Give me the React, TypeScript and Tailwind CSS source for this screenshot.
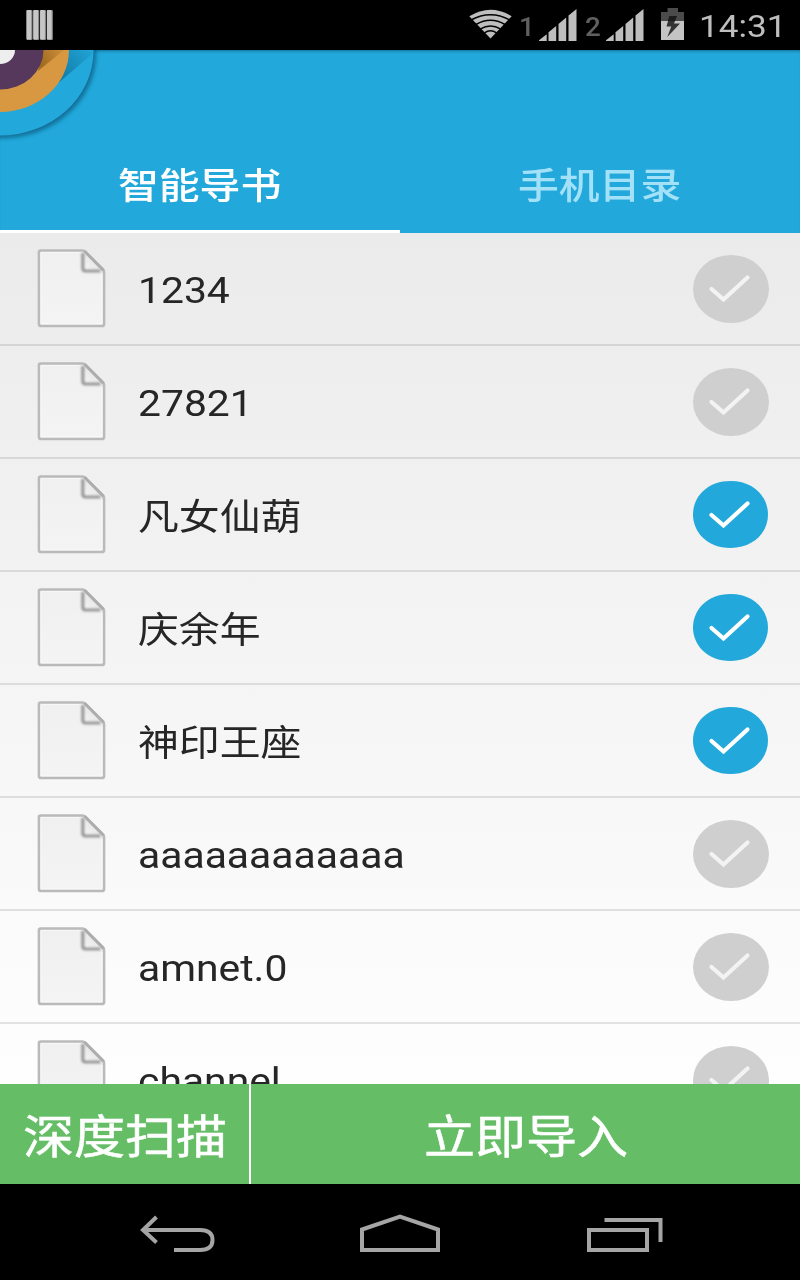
import React from "react";

type Book = { name: string; checked: boolean };

const books: Book[] = [
  { name: "1234", checked: false },
  { name: "27821", checked: false },
  { name: "凡女仙葫", checked: true },
  { name: "庆余年", checked: true },
  { name: "神印王座", checked: true },
  { name: "aaaaaaaaaaaa", checked: false },
  { name: "amnet.0", checked: false },
  { name: "channel", checked: false },
];

function SignalBars() {
  return (
    <svg width="39" height="33" viewBox="0 0 39 33" fill="#bebebe">
      <path d="M-1 32 7.700 25.300V32ZM9.500 23.300 17.200 17V32H9.500ZM19.500 15 27.200 8.500V32H19.500ZM29.500 6.500 37.500 0V32H29.500Z" />
    </svg>
  );
}

function StatusBar() {
  return (
    <header className="flex h-[50px] shrink-0 items-start bg-black text-[#bebebe]">
      <svg className="ml-[26px] mt-[9px]" width="28" height="32" viewBox="0 0 28 32">
        {[0.5, 7.3, 14.1, 20.9].map((x) => (
          <g key={x}>
            <rect x={x} y="1" width="6" height="30" rx="1" fill="#858585" />
            <rect x={x} y="1" width="4.8" height="29.4" rx="1" fill="#c6c6c6" />
          </g>
        ))}
      </svg>
      <svg className="ml-[415px] mt-[9px]" width="44" height="31" viewBox="0 0 44 31">
        <path d="M.3 7.200Q21.500-5.800 42.700 7.200L21.500 29.600Z" fill="#bebebe" />
        <g fill="none" stroke="#000" strokeWidth="1.500">
          <path d="M2 11Q21.500 .4 41 11" />
          <path d="M7 15.500Q21.500 7.100 36 15.500" />
          <path d="M11.500 19.800Q21.500 14.200 31.500 19.800" />
          <path d="M15.500 23.900Q21.500 19.500 27.500 23.900" />
        </g>
      </svg>
      <span className="ml-[6px] mt-[12px] w-[15px] origin-left scale-x-[1.11] text-[25px] leading-[32px] font-medium text-[#606060]">1</span>
      <div className="ml-[5px] mt-[9px]"><SignalBars /></div>
      <span className="ml-[7px] mt-[12px] w-[15px] origin-left scale-x-[1.11] text-[25px] leading-[32px] font-medium text-[#606060]">2</span>
      <div className="ml-[6px] mt-[9px]"><SignalBars /></div>
      <svg className="ml-[15px] mt-[8px]" width="26" height="33" viewBox="0 0 26 33">
        <path d="M1 4H7.500V0H18V4H24V14H1Z" fill="#4b4b4b" />
        <path d="M1 13H24V32H1Z" fill="#c4c4c4" />
        <path d="M9.500 8H17L14 15.500H20L7.300 29 11.300 18.500H6.500Z" fill="#333" />
        <path d="M9.500 8H17L14.800 13H7.800Z" fill="#1c1c1c" />
      </svg>
      <span className="ml-[13px] mt-[6px] origin-left scale-x-[1.1] text-[32px] leading-[40px] whitespace-nowrap">14:31</span>
    </header>
  );
}

function Logo() {
  return (
    <svg className="block h-[100px] w-[110px]" viewBox="0 0 110 100">
      <defs>
        <filter id="soft" x="-20%" y="-20%" width="140%" height="140%">
          <feGaussianBlur stdDeviation="2" />
        </filter>
        <linearGradient id="blueShade" gradientUnits="userSpaceOnUse" x1="60" y1="28" x2="90" y2="0">
          <stop offset="0" stopColor="#075f87" stopOpacity=".6" />
          <stop offset="1" stopColor="#075f87" stopOpacity=".08" />
        </linearGradient>
        <linearGradient id="orangeShade" gradientUnits="userSpaceOnUse" x1="42" y1="12" x2="64" y2="0">
          <stop offset="0" stopColor="#704000" stopOpacity=".5" />
          <stop offset="1" stopColor="#704000" stopOpacity=".08" />
        </linearGradient>
        <clipPath id="disc"><ellipse cx="0" cy="1" rx="93.500" ry="84.500" /></clipPath>
      </defs>
      <ellipse cx="2" cy="3" rx="94" ry="85" fill="#07547a" opacity=".75" filter="url(#soft)" />
      <ellipse cx="0" cy="1" rx="93.500" ry="84.500" fill="#22a8da" />
      <path d="M56 35 92 4V0H60Z" fill="url(#blueShade)" clipPath="url(#disc)" />
      <ellipse cx="0" cy="0" rx="69" ry="62" fill="#d79841" />
      <path d="M38 21 64 0H42Z" fill="url(#orangeShade)" />
      <ellipse cx="0" cy="0" rx="43.500" ry="39.500" fill="#56385c" />
      <ellipse cx="0" cy="0" rx="15" ry="14" fill="#eee" />
    </svg>
  );
}

function FileIcon() {
  return (
    <svg className="ml-[36px] mt-[14px] shrink-0 self-start" width="72" height="82" viewBox="0 0 72 82">
      <defs>
        <linearGradient id="paper" x1="0" y1="0" x2="0" y2="1">
          <stop offset="0" stopColor="#f0f0f0" />
          <stop offset="1" stopColor="#f4f4f4" />
        </linearGradient>
        <linearGradient id="fold" x1="0" y1="1" x2="1" y2="0">
          <stop offset="0" stopColor="#f6f6f6" />
          <stop offset="1" stopColor="#dcdcdc" />
        </linearGradient>
        <filter id="foldBlur" x="-20%" y="-20%" width="140%" height="140%"><feGaussianBlur stdDeviation=".9" /></filter>
      </defs>
      <path d="M4.500 3.500H46.500Q48 3.500 49.500 5L66.800 22.200Q68 23.500 68 25V77Q68 79 66 79H5Q3 79 3 77V5Q3 3.500 4.500 3.500Z" fill="url(#paper)" stroke="#bababa" strokeWidth="2.700" />
      <path d="M5 5.500H45M5 5.500V76.500H66V27" fill="none" stroke="#f7f7f7" strokeWidth="1.200" />
      <path d="M47 5V23.500H66Z" fill="url(#fold)" />
      <path d="M46.800 6V21Q46.800 24 49.500 24H64.500" fill="none" stroke="#999" strokeWidth="3.200" filter="url(#foldBlur)" />
      <path d="M48.500 4.200 67.500 23.500" stroke="#adadad" strokeWidth="2.800" />
    </svg>
  );
}

function CheckMark({ checked }: { checked: boolean }) {
  return (
    <svg className="mr-[31px] mt-[22px] shrink-0 self-start" width="76" height="68" viewBox="0 0 76 68">
      {checked ? (
        <path d="M37.500 0C61 0 75 16 75 33.500C75 51 61 67 37.500 67C14 67 0 51 0 33.500C0 16 14 0 37.500 0Z" fill="#22a8da" />
      ) : (
        <ellipse cx="38" cy="34" rx="38" ry="34" fill="#cfcfcf" />
      )}
      <path d="M18.500 34 30.500 44.500 54.500 22.500" fill="none" stroke={checked ? "#fff" : "#f3f3f3"} strokeWidth="4.200" strokeLinecap="round" strokeLinejoin="miter" />
    </svg>
  );
}

function BookRow({ book }: { book: Book }) {
  const latin = /^[\x20-\x7e]+$/.test(book.name);
  return (
    <li className="flex h-[113px] shrink-0 items-center border-b-2 border-black/10">
      <FileIcon />
      <span
        className={`ml-[30px] origin-left scale-x-[1.11] text-[36.800px] leading-[44px] whitespace-nowrap text-[#262626] ${latin ? "pt-[4px]" : "pt-[7px]"}`}
      >
        {book.name}
      </span>
      <div className="ml-auto self-start">
        <CheckMark checked={book.checked} />
      </div>
    </li>
  );
}

function NavBar() {
  return (
    <nav className="flex h-24 shrink-0 items-start bg-black pt-[28px]">
      <svg className="ml-[139px]" width="78" height="42" viewBox="0 0 78 42" fill="none" stroke="#a5a5a5" strokeWidth="4">
        <path d="M4 18H61Q73.500 18 73.500 28Q73.500 38 61 38H35" />
        <path d="M17.500 5 4 18 17.500 30.500" />
      </svg>
      <svg className="ml-[141px]" width="84" height="42" viewBox="0 0 84 42" fill="none" stroke="#a5a5a5" strokeWidth="4">
        <path d="M4 38V17.500L42 4.500 80 17.500V38Z" />
      </svg>
      <svg className="ml-[143px]" width="80" height="42" viewBox="0 0 80 42" fill="none" stroke="#a5a5a5" strokeWidth="4">
        <path d="M4 18H62V38H4Z" />
        <path d="M19.500 8H75.500V30" />
      </svg>
    </nav>
  );
}

export default function App() {
  return (
    <div className="flex h-[1280px] w-[800px] flex-col overflow-hidden bg-white font-[Roboto,'Noto_Sans_CJK_SC',sans-serif]">
      <StatusBar />
      <section className="flex h-[183px] shrink-0 flex-col bg-[#22a8da] shadow-[inset_0_3px_3px_-2px_rgba(0,40,60,0.45)]">
        <Logo />
        <div className="grid h-[83px] grid-cols-2 text-[36.800px] leading-[44px] font-medium text-white">
          <button className="flex items-start justify-center border-b-[3px] border-white pt-[15px]">
            <span className="scale-x-[1.11]">智能导书</span>
          </button>
          <button className="flex items-start justify-center pt-[15px] text-[#a3e1f8]">
            <span className="scale-x-[1.11]">手机目录</span>
          </button>
        </div>
      </section>
      <ul className="flex h-[851px] shrink-0 flex-col overflow-hidden bg-linear-to-b from-[#ebebeb] to-[#fefefe]">
        {books.map((book) => (
          <BookRow key={book.name} book={book} />
        ))}
      </ul>
      <footer className="flex h-[100px] shrink-0 bg-[#65bd66] text-[46px] leading-[56px] text-white">
        <button className="flex w-[251px] items-center justify-center border-r-2 border-white pt-[5px]">
          <span className="scale-x-[1.11] whitespace-nowrap [-webkit-text-stroke:0.5px_white]">深度扫描</span>
        </button>
        <button className="flex flex-1 items-center justify-center pt-[5px]">
          <span className="scale-x-[1.11] [-webkit-text-stroke:0.5px_white]">立即导入</span>
        </button>
      </footer>
      <NavBar />
    </div>
  );
}
